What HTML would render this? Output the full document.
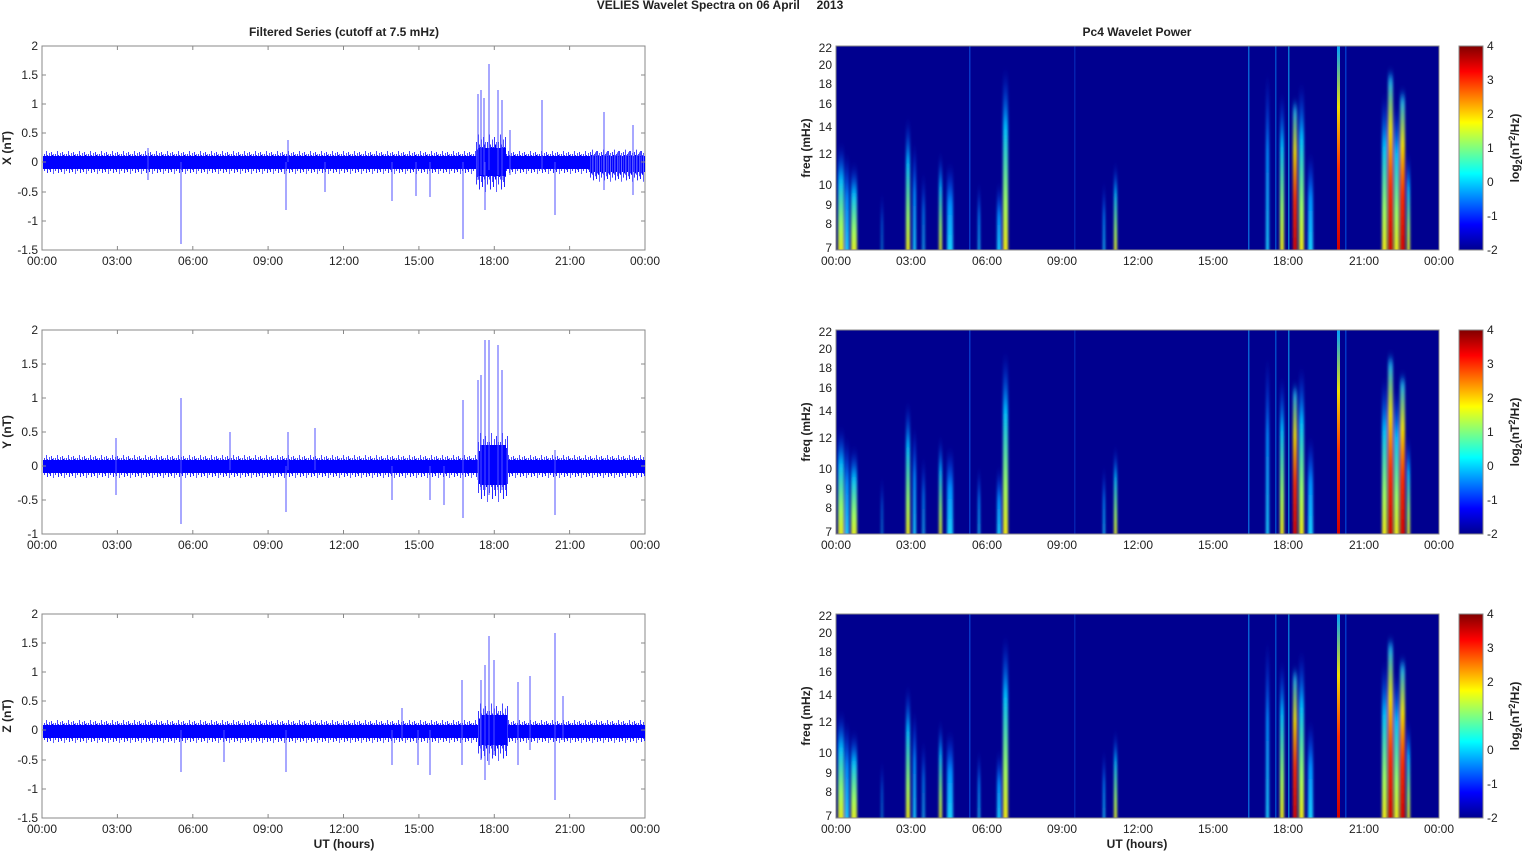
<!DOCTYPE html>
<html><head><meta charset="utf-8"><style>
html,body{margin:0;padding:0;background:#fff;width:1526px;height:851px;overflow:hidden}
svg{display:block}
text{font-family:"Liberation Sans",Arial,sans-serif;font-size:12px;fill:#222}
.b{font-weight:bold}
</style></head><body>
<svg width="1526" height="851" viewBox="0 0 1526 851" xmlns="http://www.w3.org/2000/svg">
<defs>
<filter id="bl" x="-0.05" y="-0.05" width="1.1" height="1.1"><feGaussianBlur stdDeviation="1.3 5"/></filter>
<pattern id="nz" x="0" y="0" width="11" height="40" patternUnits="userSpaceOnUse">
<line x1="0.5" y1="12" x2="0.5" y2="29" stroke="#3a3aff" stroke-width="1"/>
<line x1="1.5" y1="15" x2="1.5" y2="26" stroke="#0000ff" stroke-width="1"/>
<line x1="2.5" y1="9" x2="2.5" y2="27" stroke="#4a4aff" stroke-width="1"/>
<line x1="3.5" y1="13" x2="3.5" y2="31" stroke="#2a2aff" stroke-width="1"/>
<line x1="4.5" y1="14" x2="4.5" y2="25" stroke="#0000ff" stroke-width="1"/>
<line x1="5.5" y1="11" x2="5.5" y2="28" stroke="#5050ff" stroke-width="1"/>
<line x1="6.5" y1="14" x2="6.5" y2="30" stroke="#2020ff" stroke-width="1"/>
<line x1="7.5" y1="10" x2="7.5" y2="26" stroke="#3a3aff" stroke-width="1"/>
<line x1="8.5" y1="13" x2="8.5" y2="27" stroke="#0000ff" stroke-width="1"/>
<line x1="9.5" y1="12" x2="9.5" y2="32" stroke="#6060ff" stroke-width="1"/>
<line x1="10.5" y1="15" x2="10.5" y2="25" stroke="#0000ff" stroke-width="1"/>
</pattern>
<linearGradient id="jet" x1="0" y1="1" x2="0" y2="0">
<stop offset="0" stop-color="#00008f"/><stop offset="0.125" stop-color="#0000ff"/>
<stop offset="0.375" stop-color="#00ffff"/><stop offset="0.625" stop-color="#ffff00"/>
<stop offset="0.875" stop-color="#ff0000"/><stop offset="1" stop-color="#800000"/>
</linearGradient>
<linearGradient id="gC" x1="0" y1="0" x2="0" y2="1"><stop offset="0" stop-color="#0040ff" stop-opacity="0"/><stop offset="0.4" stop-color="#0090ff"/><stop offset="1" stop-color="#20e0ff"/></linearGradient>
<linearGradient id="gY" x1="0" y1="0" x2="0" y2="1"><stop offset="0" stop-color="#0040ff" stop-opacity="0"/><stop offset="0.3" stop-color="#00c0ff"/><stop offset="0.7" stop-color="#a0ff60"/><stop offset="1" stop-color="#ffe000"/></linearGradient>
<linearGradient id="gR" x1="0" y1="0" x2="0" y2="1"><stop offset="0" stop-color="#00a0ff"/><stop offset="0.3" stop-color="#f0e000"/><stop offset="0.6" stop-color="#ff3000"/><stop offset="1" stop-color="#d00000"/></linearGradient>
<clipPath id="cp"><rect x="0" y="0" width="603" height="204"/></clipPath>
<g id="xt">
<text x="42" y="0" text-anchor="middle">00:00</text><text x="117" y="0" text-anchor="middle">03:00</text><text x="193" y="0" text-anchor="middle">06:00</text><text x="268" y="0" text-anchor="middle">09:00</text><text x="344" y="0" text-anchor="middle">12:00</text><text x="419" y="0" text-anchor="middle">15:00</text><text x="494" y="0" text-anchor="middle">18:00</text><text x="570" y="0" text-anchor="middle">21:00</text><text x="645" y="0" text-anchor="middle">00:00</text>
</g>
<g id="spec">
<rect x="0" y="0" width="603" height="204" fill="#00008f"/>
<g clip-path="url(#cp)"><g filter="url(#bl)">
<rect x="2" y="100" width="6" height="114" fill="url(#gY)"/>
<rect x="9" y="110" width="4" height="104" fill="url(#gC)"/>
<rect x="15" y="120" width="6" height="94" fill="url(#gY)"/>
<rect x="45" y="150" width="2" height="64" fill="url(#gC)" opacity=".6"/>
<rect x="70" y="75" width="4" height="139" fill="url(#gY)"/>
<rect x="77" y="100" width="3" height="114" fill="url(#gC)"/>
<rect x="86" y="130" width="3" height="84" fill="url(#gC)" opacity=".7"/>
<rect x="103" y="110" width="3" height="104" fill="url(#gY)"/>
<rect x="111" y="120" width="6" height="94" fill="url(#gC)"/>
<rect x="142" y="140" width="2" height="74" fill="url(#gC)"/>
<rect x="161" y="140" width="4" height="74" fill="url(#gC)"/>
<rect x="167" y="25" width="5" height="189" fill="url(#gY)"/>
<rect x="267" y="140" width="2" height="74" fill="url(#gC)"/>
<rect x="278" y="120" width="3" height="94" fill="url(#gY)"/>
<rect x="430" y="30" width="3" height="184" fill="url(#gC)"/>
<rect x="444" y="50" width="4" height="164" fill="url(#gY)"/>
<rect x="457" y="60" width="4" height="154" fill="url(#gR)"/>
<rect x="463" y="40" width="5" height="174" fill="url(#gY)"/>
<rect x="472" y="110" width="5" height="104" fill="url(#gC)"/>
<rect x="546" y="50" width="5" height="164" fill="url(#gY)"/>
<rect x="552" y="30" width="5" height="184" fill="url(#gR)"/>
<rect x="558" y="60" width="5" height="154" fill="url(#gY)"/>
<rect x="564" y="50" width="5" height="164" fill="url(#gR)"/>
<rect x="571" y="110" width="3" height="104" fill="url(#gY)"/>
</g>
<rect x="501" y="0" width="3" height="204" fill="url(#gR)"/>
<rect x="133" y="0" width="1.5" height="204" fill="#1070ff" opacity=".5"/>
<rect x="238" y="0" width="1.5" height="204" fill="#0840d0" opacity=".5"/>
<rect x="412" y="0" width="1.5" height="204" fill="#10a0ff" opacity=".6"/>
<rect x="439" y="0" width="1.5" height="204" fill="#0090ff" opacity=".5"/>
<rect x="452" y="0" width="1.5" height="204" fill="#10c0ff" opacity=".6"/>
<rect x="509" y="0" width="1.5" height="204" fill="#0070ff" opacity=".5"/>
</g>
</g>
</defs>

<text x="720" y="9" text-anchor="middle" class="b" xml:space="preserve">VELIES Wavelet Spectra on 06 April     2013</text>
<text x="344" y="36" text-anchor="middle" class="b">Filtered Series (cutoff at 7.5 mHz)</text>
<text x="1137" y="36" text-anchor="middle" class="b">Pc4 Wavelet Power</text>

<!-- Panel 1 -->
<g>
<rect x="42" y="46" width="603" height="204" fill="#fff" stroke="#888"/>
<g transform="translate(0,142)"><rect x="43" y="0" width="602" height="40" fill="url(#nz)"/></g>
<rect x="43" y="156" width="602" height="13" fill="#0000ff"/>
<g transform="translate(476,112) scale(1,2.5)"><rect x="0" y="0" width="30" height="40" fill="url(#nz)"/></g>
<rect x="478" y="148" width="28" height="28" fill="#0000ff"/>
<g transform="translate(590,137) scale(1,1.4)"><rect x="0" y="0" width="55" height="40" fill="url(#nz)"/></g>
<g stroke="#5050ff" stroke-width="1">
<path d="M181 162V244M286 162V210M463 162V239M485 162V210M555 162V215M430 162V197M392 162V201M416 162V196M489 64V170M481 90V175M484 98V175M498 90V175M502 100V180M478 94V180M542 100V170M510 130V175M604 112V190M633 125V195M325 162V192M288 162V140M148 148V180"/>
</g>
<g stroke="#888"><path d="M117.4 46v4M192.8 46v4M268.1 46v4M343.5 46v4M418.9 46v4M494.3 46v4M569.6 46v4M117.4 250v-4M192.8 250v-4M268.1 250v-4M343.5 250v-4M418.9 250v-4M494.3 250v-4M569.6 250v-4M42 75h4M42 104h4M42 133h4M42 162h4M42 192h4M42 221h4M645 75h-4M645 104h-4M645 133h-4M645 162h-4M645 192h-4M645 221h-4"/></g>
<g text-anchor="end"><text x="38" y="50">2</text><text x="38" y="79">1.5</text><text x="38" y="108">1</text><text x="38" y="137">0.5</text><text x="38" y="166">0</text><text x="38" y="196">-0.5</text><text x="38" y="225">-1</text><text x="38" y="254">-1.5</text></g>
<use href="#xt" y="265"/>
<text transform="translate(11,148) rotate(-90)" text-anchor="middle" class="b">X (nT)</text>
</g>
<!-- Panel 2 -->
<g>
<rect x="42" y="330" width="603" height="204" fill="#fff" stroke="#888"/>
<g transform="translate(0,446)"><rect x="43" y="0" width="602" height="40" fill="url(#nz)"/></g>
<rect x="43" y="460" width="602" height="13" fill="#0000ff"/>
<g transform="translate(478,406) scale(1,3)"><rect x="0" y="0" width="30" height="40" fill="url(#nz)"/></g>
<rect x="480" y="445" width="26" height="40" fill="#0000ff"/>
<g stroke="#5050ff" stroke-width="1">
<path d="M181 398V524M286 466V512M463 400V518M485 340V490M489 340V495M498 345V490M502 370V490M481 375V490M478 380V480M555 450V515M430 466V500M444 466V505M392 466V500M230 432V470M315 428V470M288 432V470M116 438V495"/>
</g>
<g stroke="#888"><path d="M117.4 330v4M192.8 330v4M268.1 330v4M343.5 330v4M418.9 330v4M494.3 330v4M569.6 330v4M117.4 534v-4M192.8 534v-4M268.1 534v-4M343.5 534v-4M418.9 534v-4M494.3 534v-4M569.6 534v-4M42 364h4M42 398h4M42 432h4M42 466h4M42 500h4M645 364h-4M645 398h-4M645 432h-4M645 466h-4M645 500h-4"/></g>
<g text-anchor="end"><text x="38" y="334">2</text><text x="38" y="368">1.5</text><text x="38" y="402">1</text><text x="38" y="436">0.5</text><text x="38" y="470">0</text><text x="38" y="504">-0.5</text><text x="38" y="538">-1</text></g>
<use href="#xt" y="549"/>
<text transform="translate(11,432) rotate(-90)" text-anchor="middle" class="b">Y (nT)</text>
</g>
<!-- Panel 3 -->
<g>
<rect x="42" y="614" width="603" height="204" fill="#fff" stroke="#888"/>
<g transform="translate(0,711)"><rect x="43" y="0" width="602" height="40" fill="url(#nz)"/></g>
<rect x="43" y="725" width="602" height="13" fill="#0000ff"/>
<g transform="translate(478,681) scale(1,2.5)"><rect x="0" y="0" width="30" height="40" fill="url(#nz)"/></g>
<rect x="481" y="715" width="26" height="30" fill="#0000ff"/>
<g stroke="#5050ff" stroke-width="1">
<path d="M181 730V772M286 730V772M555 633V800M489 636V765M485 665V780M494 660V755M481 680V760M518 682V765M530 676V750M462 680V765M563 696V740M418 730V765M392 730V765M402 708V740M430 730V775M224 730V762"/>
</g>
<g stroke="#888"><path d="M117.4 614v4M192.8 614v4M268.1 614v4M343.5 614v4M418.9 614v4M494.3 614v4M569.6 614v4M117.4 818v-4M192.8 818v-4M268.1 818v-4M343.5 818v-4M418.9 818v-4M494.3 818v-4M569.6 818v-4M42 643h4M42 672h4M42 701h4M42 730h4M42 760h4M42 789h4M645 643h-4M645 672h-4M645 701h-4M645 730h-4M645 760h-4M645 789h-4"/></g>
<g text-anchor="end"><text x="38" y="618">2</text><text x="38" y="647">1.5</text><text x="38" y="676">1</text><text x="38" y="705">0.5</text><text x="38" y="734">0</text><text x="38" y="764">-0.5</text><text x="38" y="793">-1</text><text x="38" y="822">-1.5</text></g>
<use href="#xt" y="833"/>
<text x="344" y="848" text-anchor="middle" class="b">UT (hours)</text>
<text transform="translate(11,716) rotate(-90)" text-anchor="middle" class="b">Z (nT)</text>
</g>

<!-- RIGHT PANELS -->
<g>
<use href="#spec" x="836" y="46"/>
<rect x="836" y="46" width="603" height="204" fill="none" stroke="#888"/>
<g text-anchor="end"><text x="832" y="52">22</text><text x="832" y="69">20</text><text x="832" y="88">18</text><text x="832" y="108">16</text><text x="832" y="131">14</text><text x="832" y="158">12</text><text x="832" y="189">10</text><text x="832" y="209">9</text><text x="832" y="228">8</text><text x="832" y="252">7</text></g>
<text transform="translate(810,148) rotate(-90)" text-anchor="middle" class="b">freq (mHz)</text>
<use href="#xt" x="794" y="265"/>
<rect x="1459" y="46" width="24" height="204" fill="url(#jet)" stroke="#888"/>
<g><text x="1487" y="50">4</text><text x="1487" y="84">3</text><text x="1487" y="118">2</text><text x="1487" y="152">1</text><text x="1487" y="186">0</text><text x="1487" y="220">-1</text><text x="1487" y="254">-2</text></g>
<text transform="translate(1519,148) rotate(-90)" text-anchor="middle" class="b">log<tspan font-size="9" dy="3">2</tspan><tspan dy="-3">(nT</tspan><tspan font-size="9" dy="-4">2</tspan><tspan dy="4">/Hz)</tspan></text>
</g>
<g transform="translate(0,284)">
<use href="#spec" x="836" y="46"/>
<rect x="836" y="46" width="603" height="204" fill="none" stroke="#888"/>
<g text-anchor="end"><text x="832" y="52">22</text><text x="832" y="69">20</text><text x="832" y="88">18</text><text x="832" y="108">16</text><text x="832" y="131">14</text><text x="832" y="158">12</text><text x="832" y="189">10</text><text x="832" y="209">9</text><text x="832" y="228">8</text><text x="832" y="252">7</text></g>
<text transform="translate(810,148) rotate(-90)" text-anchor="middle" class="b">freq (mHz)</text>
<use href="#xt" x="794" y="265"/>
<rect x="1459" y="46" width="24" height="204" fill="url(#jet)" stroke="#888"/>
<g><text x="1487" y="50">4</text><text x="1487" y="84">3</text><text x="1487" y="118">2</text><text x="1487" y="152">1</text><text x="1487" y="186">0</text><text x="1487" y="220">-1</text><text x="1487" y="254">-2</text></g>
<text transform="translate(1519,148) rotate(-90)" text-anchor="middle" class="b">log<tspan font-size="9" dy="3">2</tspan><tspan dy="-3">(nT</tspan><tspan font-size="9" dy="-4">2</tspan><tspan dy="4">/Hz)</tspan></text>
</g>
<g transform="translate(0,568)">
<use href="#spec" x="836" y="46"/>
<rect x="836" y="46" width="603" height="204" fill="none" stroke="#888"/>
<g text-anchor="end"><text x="832" y="52">22</text><text x="832" y="69">20</text><text x="832" y="88">18</text><text x="832" y="108">16</text><text x="832" y="131">14</text><text x="832" y="158">12</text><text x="832" y="189">10</text><text x="832" y="209">9</text><text x="832" y="228">8</text><text x="832" y="252">7</text></g>
<text transform="translate(810,148) rotate(-90)" text-anchor="middle" class="b">freq (mHz)</text>
<use href="#xt" x="794" y="265"/>
<text x="1137" y="280" text-anchor="middle" class="b">UT (hours)</text>
<rect x="1459" y="46" width="24" height="204" fill="url(#jet)" stroke="#888"/>
<g><text x="1487" y="50">4</text><text x="1487" y="84">3</text><text x="1487" y="118">2</text><text x="1487" y="152">1</text><text x="1487" y="186">0</text><text x="1487" y="220">-1</text><text x="1487" y="254">-2</text></g>
<text transform="translate(1519,148) rotate(-90)" text-anchor="middle" class="b">log<tspan font-size="9" dy="3">2</tspan><tspan dy="-3">(nT</tspan><tspan font-size="9" dy="-4">2</tspan><tspan dy="4">/Hz)</tspan></text>
</g>
</svg>
</body></html>
